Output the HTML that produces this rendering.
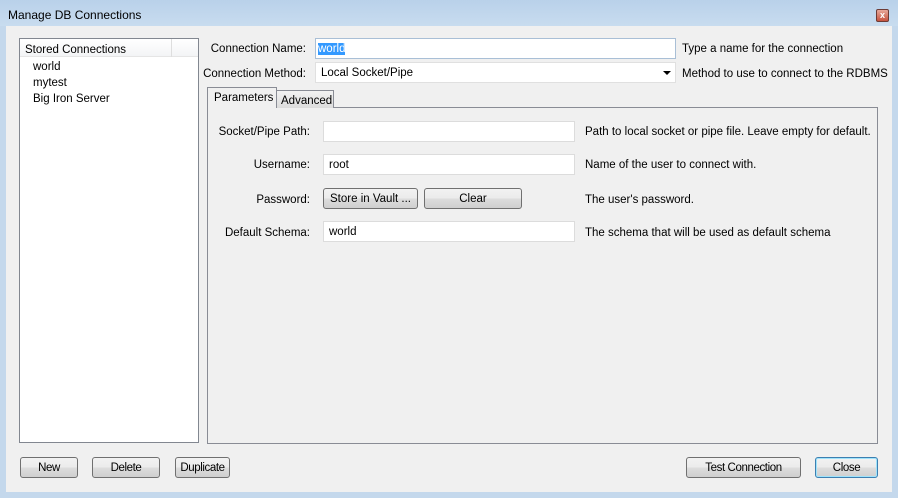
<!DOCTYPE html>
<html><head><style>
*{box-sizing:border-box;margin:0;padding:0}
body{width:898px;height:498px;overflow:hidden;background:#c4d8ec;font-family:"Liberation Sans",sans-serif;font-size:11.5px;color:#000;position:relative}
.a{position:absolute}
.t{margin-top:1px}
.title{left:0;top:0;width:898px;height:26px;background:linear-gradient(#b9d1ea,#c8dcef)}
.dlg{left:6px;top:26px;width:886px;height:466px;background:#f0f0f0}
.inp{background:#fff;border:1px solid #c9cfd6;height:21px;padding:4px 0 0 5px;white-space:nowrap}
.lbl{text-align:right;white-space:nowrap}
.btn{border:1px solid #707070;border-radius:3px;background:linear-gradient(#f2f2f2 0%,#ebebeb 50%,#dddddd 51%,#cfcfcf 100%);text-align:center;height:21px;padding-top:4px;white-space:nowrap}
.sm{font-size:11.5px;letter-spacing:-0.4px}
</style></head><body>
<div class="a title"></div>
<div class="a" style="left:8px;top:8px;font-size:12px">Manage DB Connections</div>
<div class="a" style="left:876px;top:9px;width:13px;height:13px;border:1px solid #6d3b35;border-radius:2px;background:linear-gradient(#e8a89a,#c6533f);color:#fff;font-size:9px;line-height:11px;text-align:center;font-weight:bold">x</div>
<div class="a dlg"></div>
<div class="a" style="left:19px;top:38px;width:180px;height:405px;background:#fff;border:1px solid #828790"></div>
<div class="a" style="left:20px;top:39px;width:178px;height:18px;background:linear-gradient(#fff,#f3f4f6);border-bottom:1px solid #e5e5e5"></div>
<div class="a" style="left:171px;top:39px;width:1px;height:18px;background:#dedede"></div>
<div class="a t" style="left:25px;top:43px">Stored Connections</div>
<div class="a t" style="left:33px;top:60px">world</div>
<div class="a t" style="left:33px;top:76px">mytest</div>
<div class="a t" style="left:33px;top:92px">Big Iron Server</div>

<div class="a lbl t" style="left:200px;top:42px;width:106px">Connection Name:</div>
<div class="a inp" style="left:315px;top:38px;width:361px;border-color:#a9bfd6;padding-left:2px"><span style="background:#3399ff;color:#fff">world</span></div>
<div class="a t" style="left:682px;top:42px">Type a name for the connection</div>
<div class="a lbl t" style="left:200px;top:67px;width:106px">Connection Method:</div>
<div class="a inp" style="left:315px;top:62px;width:361px;border-color:#e0e0e0">Local Socket/Pipe</div>
<div class="a" style="left:663px;top:71px;width:0;height:0;border-left:4px solid transparent;border-right:4px solid transparent;border-top:4px solid #000"></div>
<div class="a t" style="left:682px;top:67px">Method to use to connect to the RDBMS</div>

<div class="a" style="left:207px;top:107px;width:671px;height:337px;border:1px solid #898c95;background:#f0f0f0"></div>
<div class="a" style="left:276px;top:90px;width:58px;height:18px;border:1px solid #898c95;border-bottom:none;background:linear-gradient(#f2f2f2,#dcdcdc);padding:4px 0 0 4px">Advanced</div>
<div class="a" style="left:207px;top:87px;width:70px;height:21px;border:1px solid #898c95;border-bottom:none;background:#f0f0f0;padding:4px 0 0 6px">Parameters</div>

<div class="a lbl t" style="left:210px;top:125px;width:100px">Socket/Pipe Path:</div>
<div class="a inp" style="left:323px;top:121px;width:252px;border-color:#dcdcdc"></div>
<div class="a t" style="left:585px;top:125px">Path to local socket or pipe file. Leave empty for default.</div>
<div class="a lbl t" style="left:210px;top:158px;width:100px">Username:</div>
<div class="a inp" style="left:323px;top:154px;width:252px;border-color:#dcdcdc">root</div>
<div class="a t" style="left:585px;top:158px">Name of the user to connect with.</div>
<div class="a lbl t" style="left:210px;top:193px;width:100px">Password:</div>
<div class="a btn" style="left:323px;top:188px;width:95px">Store in Vault ...</div>
<div class="a btn" style="left:424px;top:188px;width:98px">Clear</div>
<div class="a t" style="left:585px;top:193px">The user's password.</div>
<div class="a lbl t" style="left:210px;top:226px;width:100px">Default Schema:</div>
<div class="a inp" style="left:323px;top:221px;width:252px;border-color:#dcdcdc">world</div>
<div class="a t" style="left:585px;top:226px">The schema that will be used as default schema</div>

<div class="a btn sm" style="left:20px;top:457px;width:58px">New</div>
<div class="a btn sm" style="left:92px;top:457px;width:68px">Delete</div>
<div class="a btn sm" style="left:175px;top:457px;width:55px">Duplicate</div>
<div class="a btn sm" style="left:686px;top:457px;width:115px">Test Connection</div>
<div class="a btn sm" style="left:815px;top:457px;width:63px;border-color:#3c7fb1;box-shadow:inset 0 0 0 1px #9fe3fb">Close</div>
</body></html>
